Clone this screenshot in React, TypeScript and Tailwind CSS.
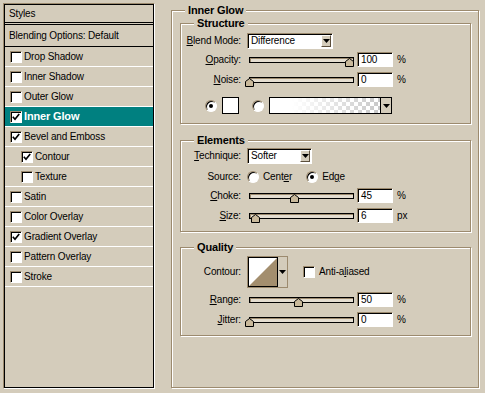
import React from 'react'

type Layer = { name: string; on?: boolean; indent?: boolean; active?: boolean }

const layers: Layer[] = [
  { name: 'Drop Shadow' },
  { name: 'Inner Shadow' },
  { name: 'Outer Glow' },
  { name: 'Inner Glow', on: true, active: true },
  { name: 'Bevel and Emboss', on: true },
  { name: 'Contour', on: true, indent: true },
  { name: 'Texture', indent: true },
  { name: 'Satin' },
  { name: 'Color Overlay' },
  { name: 'Gradient Overlay', on: true },
  { name: 'Pattern Overlay' },
  { name: 'Stroke' },
]

function Tick() {
  return (
    <svg width="8" height="8" viewBox="0 0 8 8" className="block">
      <path d="M0.8 3.8 L3 6.2 L7.2 1" stroke="#000" strokeWidth="1.7" fill="none" />
    </svg>
  )
}

function CheckBox({ on }: { on?: boolean }) {
  return (
    <span className="flex h-[12px] w-[12px] shrink-0 items-center justify-center border border-[#9c8a6e] border-r-white border-b-white bg-white shadow-[inset_1px_1px_0_#000]">
      {on && <Tick />}
    </span>
  )
}

function Radio({ on }: { on?: boolean }) {
  return (
    <span className="flex h-[12px] w-[12px] shrink-0 items-center justify-center rounded-full border border-[#9c8a6e] border-r-white border-b-white bg-white shadow-[inset_1px_1px_0_#000]">
      {on && <span className="h-[4px] w-[4px] rounded-full bg-black" />}
    </span>
  )
}

function Arrow() {
  return (
    <svg width="7" height="4" viewBox="0 0 7 4" className="block">
      <path d="M0 0 H7 L3.5 4 Z" fill="#000" />
    </svg>
  )
}

function NumBox({ v }: { v: string }) {
  return (
    <div className="ml-[3px] flex h-[15px] w-[36px] items-center border border-[#9c8a6e] border-r-white border-b-white bg-white pl-[3px] shadow-[inset_1px_1px_0_#000]">
      {v}
    </div>
  )
}

function Select({ value, className }: { value: string; className: string }) {
  return (
    <div className={`flex h-[16px] border border-[#9c8a6e] border-r-white border-b-white bg-white shadow-[inset_1px_1px_0_#000] ${className}`}>
      <span className="flex flex-1 items-center pl-[3px]">{value}</span>
      <span className="m-[1px] flex w-[10px] items-center justify-center border border-white border-r-[#5c4f3c] border-b-[#5c4f3c] bg-[#d4ccbb]">
        <Arrow />
      </span>
    </div>
  )
}

function Slider({ pos }: { pos: number }) {
  return (
    <div className="relative ml-[8px] flex h-[15px] w-[105px] items-center">
      <div className="h-[6px] w-full border border-black bg-[#e4ddd0] shadow-[inset_1px_1px_0_#9c8a6e]" />
      <svg className="absolute top-[6px]" style={{ left: pos - 4 }} width="9" height="9" viewBox="0 0 9 9">
        <path d="M0.5 8.5V3.5L4.5 0.5L8.5 3.5V8.5Z" fill="#c9b99b" stroke="#000" />
      </svg>
    </div>
  )
}

function Label({ children }: { children: React.ReactNode }) {
  return <span className="w-[60px] shrink-0 text-right">{children}</span>
}

function SliderRow({ label, pos, v, unit, className }: { label: React.ReactNode; pos: number; v: string; unit: string; className: string }) {
  return (
    <div className={`flex h-[15px] items-center ${className}`}>
      <Label>{label}</Label>
      <Slider pos={pos} />
      <NumBox v={v} />
      <span className="ml-[4px]">{unit}</span>
    </div>
  )
}

function Group({ title, className, children }: { title: string; className: string; children?: React.ReactNode }) {
  return (
    <div className={`relative flex flex-col border border-[#9c8a6e] shadow-[1px_1px_0_#fff,inset_1px_1px_0_#fff] ${className}`}>
      <span className="absolute top-[-7px] left-[13px] bg-[#d4ccbb] px-[3px] text-[11px] leading-[12px] font-bold">
        {title}
      </span>
      {children}
    </div>
  )
}

export default function App() {
  return (
    <div className="flex h-[393px] w-[485px] overflow-hidden bg-[#d4ccbb] font-['Liberation_Sans',Arial,sans-serif] text-[10px] leading-none tracking-[-0.15px] text-black">
      {/* styles list */}
      <div className="mt-[3px] ml-[3px] h-[386px] w-[152px] border border-[#9c8a6e] border-r-white border-b-white">
        <div className="flex h-full flex-col border border-black">
          <div className="flex h-[18px] shrink-0 items-center border-b border-black pl-[4px]">Styles</div>
          <div className="h-[1px] shrink-0" />
          <div className="flex h-[23px] shrink-0 items-center border-y border-black pl-[4px]">Blending Options: Default</div>
          {layers.map((l) => (
            <div
              key={l.name}
              className={`flex h-[20px] shrink-0 items-center gap-[2px] border-b border-white ${l.indent ? 'pl-[16px]' : 'pl-[5px]'} ${l.active ? 'bg-[#008080] text-[11px] font-bold text-white' : ''}`}
            >
              <CheckBox on={l.on} />
              <span>{l.name}</span>
            </div>
          ))}
        </div>
      </div>

      {/* options */}
      <Group title="Inner Glow" className="mt-[10px] ml-[16px] h-[378px] w-[308px]">
        <Group title="Structure" className="mt-[12px] ml-[8px] h-[101px] w-[291px]">
          <div className="mt-[9px] flex h-[16px] items-center">
            <Label>
              <u>B</u>lend Mode:
            </Label>
            <Select value="Difference" className="ml-[6px] w-[86px]" />
          </div>
          <SliderRow label={<><u>O</u>pacity:</>} pos={100} v="100" unit="%" className="mt-[3px]" />
          <SliderRow label={<><u>N</u>oise:</>} pos={0} v="0" unit="%" className="mt-[5px]" />
          <div className="mt-[10px] flex h-[17px] items-center pl-[24px]">
            <Radio on />
            <span className="ml-[5px] h-[17px] w-[17px] border border-black bg-white" />
            <span className="ml-[13px]">
              <Radio />
            </span>
            <div className="ml-[5px] flex h-[17px] w-[123px] border border-black">
              <div className="flex-1 bg-[conic-gradient(#c8c8c8_25%,#fff_0_50%,#c8c8c8_0_75%,#fff_0)] bg-[length:8px_8px]">
                <div className="h-full w-full bg-[linear-gradient(to_right,#fff_0%,#fff_20%,rgba(255,255,255,0)_100%)]" />
              </div>
              <span className="flex w-[11px] items-center justify-center border-l border-black bg-[#d4ccbb]">
                <Arrow />
              </span>
            </div>
          </div>
        </Group>

        <Group title="Elements" className="mt-[16px] ml-[8px] h-[92px] w-[291px]">
          <div className="mt-[7px] flex h-[16px] items-center">
            <Label>
              <u>T</u>echnique:
            </Label>
            <Select value="Softer" className="ml-[6px] w-[65px]" />
          </div>
          <div className="mt-[7px] flex h-[12px] items-center">
            <Label>Source:</Label>
            <span className="ml-[6px]">
              <Radio />
            </span>
            <span className="ml-[4px]">
              Cent<u>e</u>r
            </span>
            <span className="ml-[14px]">
              <Radio on />
            </span>
            <span className="ml-[4px]">
              Ed<u>g</u>e
            </span>
          </div>
          <SliderRow label={<><u>C</u>hoke:</>} pos={45} v="45" unit="%" className="mt-[5px]" />
          <SliderRow label={<><u>S</u>ize:</>} pos={6} v="6" unit="px" className="mt-[5px]" />
        </Group>

        <Group title="Quality" className="mt-[15px] ml-[8px] h-[89px] w-[291px]">
          <div className="mt-[8px] flex h-[32px] items-center">
            <Label>Contour:</Label>
            <div className="ml-[6px] flex h-[32px] w-[41px] border border-[#9c8a6e]">
              <div className="h-full w-[30px] border border-black bg-white">
                <svg width="28" height="28" viewBox="0 0 28 28" className="block">
                  <path d="M0 28 L28 0 V28 Z" fill="#a38e6e" />
                </svg>
              </div>
              <span className="flex flex-1 items-center justify-center">
                <Arrow />
              </span>
            </div>
            <span className="ml-[15px]">
              <CheckBox />
            </span>
            <span className="ml-[4px]">
              Anti-a<u>l</u>iased
            </span>
          </div>
          <SliderRow label={<><u>R</u>ange:</>} pos={49} v="50" unit="%" className="mt-[4px]" />
          <SliderRow label={<><u>J</u>itter:</>} pos={0} v="0" unit="%" className="mt-[5px]" />
        </Group>
      </Group>
    </div>
  )
}
